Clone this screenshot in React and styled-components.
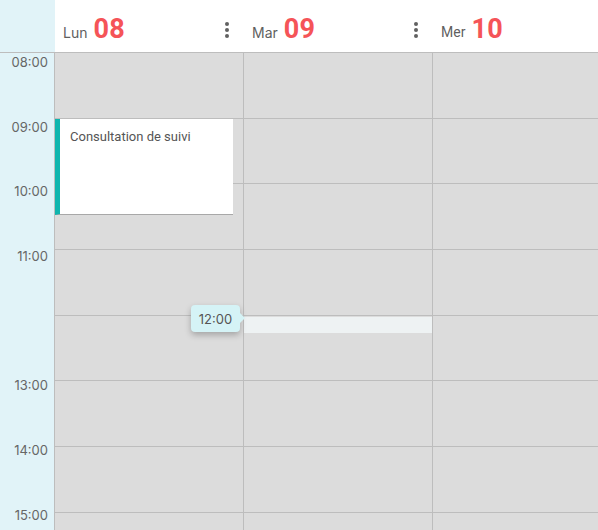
import React from "react";
import styled, { createGlobalStyle } from "styled-components";

const Global = createGlobalStyle`
  html, body { margin: 0; padding: 0; background: #fff; }
  body { width: 598px; height: 530px; overflow: hidden; font-family: Roboto, "Liberation Sans", sans-serif; }
`;

const HOUR_H = 65.7;
const LABEL_H = 64.7;

const Page = styled.div`
  display: flex;
  flex-direction: column;
  width: 598px;
  height: 530px;
  overflow: hidden;
`;

const Stage = styled.div`
  position: relative;
  display: flex;
  flex-direction: column;
  flex: 1;
`;

const HeaderRow = styled.div`
  display: flex;
  height: 53px;
  flex: none;
  box-sizing: border-box;
  border-bottom: 1px solid #bdbdbd;
`;

const Corner = styled.div`
  width: 55px;
  flex: none;
  background: #e1f3f8;
`;

const DayHead = styled.div`
  width: 189px;
  flex: none;
  display: flex;
  align-items: center;
  padding: 5px 15px 0 8px;
  box-sizing: border-box;
`;

const DayName = styled.span`
  font-family: ${(p) => (p.$roboto ? "Roboto" : "Inter")}, "Liberation Sans", sans-serif;
  font-size: 14px;
  color: #5f5f5f;
  margin-right: 6px;
  margin-top: 7px;
`;

const DayNum = styled.span`
  font-family: Roboto, "Liberation Sans", sans-serif;
  font-weight: 700;
  font-size: 27px;
  color: #f55458;
  letter-spacing: 0.3px;
`;

const Kebab = styled.div`
  margin-left: auto;
  display: flex;
  flex-direction: column;
  gap: 2px;
  padding-top: 2px;
  span {
    width: 4px;
    height: 4px;
    border-radius: 50%;
    background: #616161;
  }
`;

const Body = styled.div`
  display: flex;
  flex: 1;
  min-height: 0;
`;

const TimeCol = styled.div`
  width: 55px;
  flex: none;
  box-sizing: border-box;
  background: #e1f3f8;
  border-right: 1px solid #bdbdbd;
  display: flex;
  flex-direction: column;
`;

const TimeCell = styled.div`
  height: ${LABEL_H}px;
  flex: none;
  box-sizing: border-box;
  text-align: right;
  padding: 2px 6px 0 0;
  font-family: Inter, "Liberation Sans", sans-serif;
  font-size: 13px;
  line-height: 14px;
  color: #666;
`;

const DayCol = styled.div`
  position: relative;
  width: 189px;
  flex: none;
  box-sizing: border-box;
  background: #dcdcdc;
  border-right: 1px solid #bdbdbd;
  display: flex;
  flex-direction: column;
`;

const Slot = styled.div`
  height: ${HOUR_H}px;
  flex: none;
  box-sizing: border-box;
  border-bottom: 1px solid #bdbdbd;
`;

const Event = styled.div`
  position: absolute;
  left: 0;
  top: 66px;
  width: 178px;
  height: 96px;
  box-sizing: border-box;
  background: #fff;
  border-left: 5px solid #0fb5ae;
  border-bottom: 1px solid #a8a8a8;
  padding: 10px 10px;
  font-family: Roboto, "Liberation Sans", sans-serif;
  font-size: 13px;
  color: #555;
`;

const Highlight = styled.div`
  position: absolute;
  left: 0;
  right: 0;
  top: 264px;
  height: 16px;
  background: #eef2f3;
`;

const Tooltip = styled.div`
  position: absolute;
  left: 191px;
  top: 305px;
  width: 49px;
  height: 27px;
  box-sizing: border-box;
  background: #d5f3f6;
  border-radius: 4px;
  box-shadow: 0 3px 6px rgba(0, 0, 0, 0.25);
  display: flex;
  align-items: center;
  justify-content: center;
  font-family: Inter, "Liberation Sans", sans-serif;
  font-size: 13px;
  color: #555;
  z-index: 5;
  &::after {
    content: "";
    position: absolute;
    right: -5px;
    top: 8px;
    border-left: 5px solid #d5f3f6;
    border-top: 5px solid transparent;
    border-bottom: 5px solid transparent;
  }
`;

const hours = ["08:00", "09:00", "10:00", "11:00", "12:00", "13:00", "14:00", "15:00"];
const days = [
  { name: "Lun", num: "08" },
  { name: "Mar", num: "09" },
  { name: "Mer", num: "10", roboto: true },
];

export default function App() {
  return (
    <>
      <Global />
      <Page>
        <Stage>
          <HeaderRow>
            <Corner />
            {days.map((d) => (
              <DayHead key={d.num}>
                <DayName $roboto={d.roboto}>{d.name}</DayName>
                <DayNum>{d.num}</DayNum>
                <Kebab>
                  <span />
                  <span />
                  <span />
                </Kebab>
              </DayHead>
            ))}
          </HeaderRow>
          <Body>
            <TimeCol>
              {hours.map((h) => (
                <TimeCell key={h}>{h === "12:00" ? "" : h}</TimeCell>
              ))}
            </TimeCol>
            {days.map((d, i) => (
              <DayCol key={d.num}>
                {hours.map((h) => (
                  <Slot key={h} />
                ))}
                {i === 0 && <Event>Consultation de suivi</Event>}
                {i === 1 && <Highlight />}
              </DayCol>
            ))}
          </Body>
          <Tooltip>12:00</Tooltip>
        </Stage>
      </Page>
    </>
  );
}
